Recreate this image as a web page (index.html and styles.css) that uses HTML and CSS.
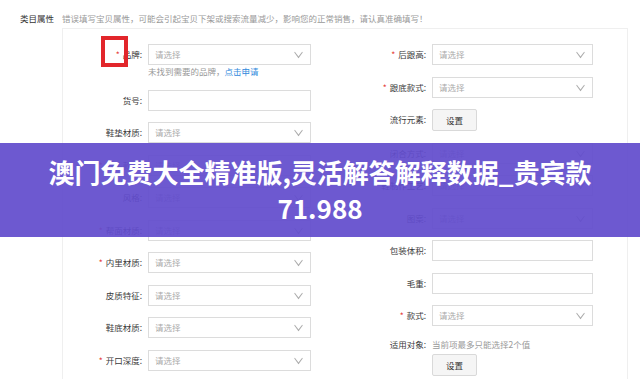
FILE: index.html
```html
<!DOCTYPE html>
<html lang="zh-CN">
<head>
    <meta charset="UTF-8">
    <meta name="viewport" content="width=device-width, initial-scale=1.0">
    <title>类目属性</title>
    <link rel="stylesheet" href="styles.css">
</head>
<body>
    <div class="attr-head">
        <span class="attr-title">类目属性</span>
        <span class="attr-tip">错误填写宝贝属性，可能会引起宝贝下架或搜索流量减少，影响您的正常销售，请认真准确填写！</span>
    </div>

    <div class="panel">
        <div class="column">
            <div class="field">
                <label><span class="req">*</span>品牌:</label>
                <div class="control">
                    <div class="select">请选择<span class="arrow"></span></div>
                    <div class="hint">未找到需要的品牌，<a href="#">点击申请</a></div>
                </div>
            </div>
            <div class="field">
                <label>货号:</label>
                <div class="control"><div class="text-input"></div></div>
            </div>
            <div class="field">
                <label>鞋垫材质:</label>
                <div class="control"><div class="select">请选择<span class="arrow"></span></div></div>
            </div>
            <div class="field">
                <label><span class="req">*</span>鞋头款式:</label>
                <div class="control"><div class="select">请选择<span class="arrow"></span></div></div>
            </div>
            <div class="field">
                <label>风格:</label>
                <div class="control"><div class="select">请选择<span class="arrow"></span></div></div>
            </div>
            <div class="field">
                <label><span class="req">*</span>帮面材质:</label>
                <div class="control"><div class="select">请选择<span class="arrow"></span></div></div>
            </div>
            <div class="field">
                <label><span class="req">*</span>内里材质:</label>
                <div class="control"><div class="select">请选择<span class="arrow"></span></div></div>
            </div>
            <div class="field">
                <label>皮质特征:</label>
                <div class="control"><div class="select">请选择<span class="arrow"></span></div></div>
            </div>
            <div class="field">
                <label>鞋底材质:</label>
                <div class="control"><div class="select">请选择<span class="arrow"></span></div></div>
            </div>
            <div class="field">
                <label><span class="req">*</span>开口深度:</label>
                <div class="control"><div class="select">请选择<span class="arrow"></span></div></div>
            </div>
        </div>

        <div class="column right">
            <div class="field">
                <label><span class="req">*</span>后跟高:</label>
                <div class="control"><div class="select">请选择<span class="arrow"></span></div></div>
            </div>
            <div class="field">
                <label><span class="req">*</span>跟底款式:</label>
                <div class="control"><div class="select">请选择<span class="arrow"></span></div></div>
            </div>
            <div class="field">
                <label>流行元素:</label>
                <div class="control"><button class="btn">设置</button></div>
            </div>
            <div class="field">
                <label>闭合方式:</label>
                <div class="control"><div class="select">请选择<span class="arrow"></span></div></div>
            </div>
            <div class="field">
                <label>鞋制作工艺:</label>
                <div class="control"><div class="select">请选择<span class="arrow"></span></div></div>
            </div>
            <div class="field">
                <label>图案:</label>
                <div class="control"><div class="select">请选择<span class="arrow"></span></div></div>
            </div>
            <div class="field">
                <label>包装体积:</label>
                <div class="control"><div class="text-input"></div></div>
            </div>
            <div class="field">
                <label>毛重:</label>
                <div class="control"><div class="text-input"></div></div>
            </div>
            <div class="field">
                <label><span class="req">*</span>款式:</label>
                <div class="control"><div class="select">请选择<span class="arrow"></span></div></div>
            </div>
            <div class="field">
                <label class="top">适用对象:</label>
                <div class="control">
                    <div class="hint tip-top">当前项最多只能选择2个值</div>
                    <button class="btn">设置</button>
                </div>
            </div>
        </div>
    </div>

    <div class="mark"></div>

    <div class="banner">
        <p>澳门免费大全精准版,灵活解答解释数据_贵宾款<br>71.988</p>
    </div>
</body>
</html>
```

FILE: styles.css
```css
body {
    margin: 0;
    width: 640px;
    height: 380px;
    overflow: hidden;
    position: relative;
    background-color: #fff;
    font-family: "Noto Sans CJK SC", "Noto Sans", sans-serif;
    font-size: 8.5px;
    color: #333;
}

.attr-head {
    display: flex;
    padding: 12px 0 0 20px;
    line-height: 13px;
}

.attr-title {
    width: 42px;
    color: #333;
}

.attr-tip {
    color: #999;
}

.panel {
    margin: 3px 0 0 62px;
    width: 564px;
    height: 335px;
    border: 1px solid #efefef;
    border-bottom: none;
    padding-top: 15px;
    display: grid;
    grid-template-columns: 248px 247px;
    column-gap: 35px;
    align-items: start;
}

.column {
    display: flex;
    flex-direction: column;
    gap: 11.5px;
}

.field {
    display: flex;
    align-items: flex-start;
}

.field label {
    width: 79px;
    flex-shrink: 0;
    margin-right: 6px;
    text-align: right;
    line-height: 21px;
    color: #3a3a3a;
}

.right .field label {
    width: 80px;
}

.field label.top {
    line-height: 13px;
}

.req {
    color: #e5403a;
    margin-right: 3px;
}

.control {
    width: 163px;
}

.right .control {
    width: 161px;
}

.select,
.text-input {
    position: relative;
    box-sizing: border-box;
    height: 21px;
    border: 1px solid #dcdcdc;
    background-color: #fff;
}

.select {
    padding-left: 6px;
    line-height: 19px;
    color: #aaa;
}

.arrow {
    position: absolute;
    right: 8px;
    top: 4px;
    width: 6px;
    height: 6px;
    border-right: 1px solid #aaa;
    border-bottom: 1px solid #aaa;
    transform: rotate(45deg) skew(8deg, 8deg);
}

.hint {
    line-height: 13px;
    color: #999;
}

.hint a {
    color: #3089dc;
    text-decoration: none;
}

.tip-top {
    margin-bottom: 3px;
}

.btn {
    display: block;
    width: 45px;
    height: 22px;
    padding: 0;
    border: 1px solid #d9d9d9;
    border-radius: 2px;
    background-color: #f5f5f5;
    font-family: inherit;
    font-size: 8.5px;
    color: #333;
}

.mark {
    position: absolute;
    left: 101px;
    top: 36px;
    width: 19px;
    height: 23px;
    border: 4px solid #e2262b;
}

.banner {
    position: absolute;
    left: 0;
    right: 0;
    top: 143px;
    height: 94px;
    display: flex;
    align-items: center;
    justify-content: center;
    background-color: rgba(98, 76, 204, 0.93);
}

.banner p {
    margin: 0;
    text-align: center;
    color: #fff;
    font-size: 26px;
    font-weight: bold;
    line-height: 36px;
}
```
